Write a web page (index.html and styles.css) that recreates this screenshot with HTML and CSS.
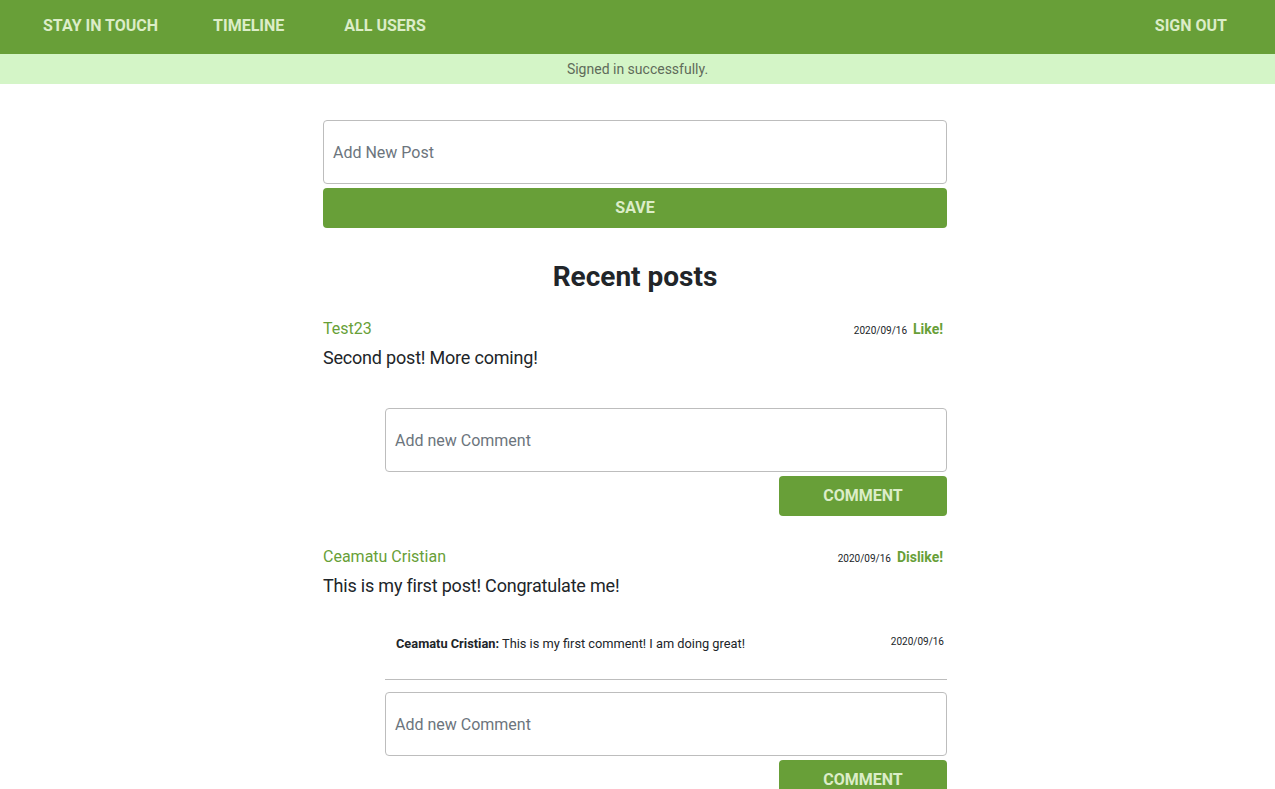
FILE: index.html
```html
<!DOCTYPE html>
<html>
<head>
<meta charset="utf-8">
<link rel="stylesheet" href="styles.css">
</head>
<body>
<nav class="nav">
  <div class="nav-left">
    <a class="nav-link brand">STAY IN TOUCH</a>
    <a class="nav-link l2">TIMELINE</a>
    <a class="nav-link l3">ALL USERS</a>
  </div>
  <a class="nav-link signout">SIGN OUT</a>
</nav>
<div class="flash">Signed in successfully.</div>
<main class="main">
  <form class="post-form">
    <div class="field">Add New Post</div>
    <div class="btn btn-full">SAVE</div>
  </form>
  <h2 class="title">Recent posts</h2>

  <section class="post">
    <div class="post-head">
      <span class="author">Test23</span>
      <span class="meta"><span class="date">2020/09/16</span><span class="like">Like!</span></span>
    </div>
    <p class="post-body">Second post! More coming!</p>
    <div class="comments">
      <div class="field">Add new Comment</div>
      <div class="btn-row"><div class="btn btn-comment">COMMENT</div></div>
    </div>
  </section>

  <section class="post">
    <div class="post-head">
      <span class="author">Ceamatu Cristian</span>
      <span class="meta"><span class="date">2020/09/16</span><span class="like">Dislike!</span></span>
    </div>
    <p class="post-body">This is my first post! Congratulate me!</p>
    <div class="comments">
      <div class="comment">
        <span class="comment-text"><b>Ceamatu Cristian:</b> This is my first comment! I am doing great!</span>
        <span class="date">2020/09/16</span>
      </div>
      <div class="field">Add new Comment</div>
      <div class="btn-row"><div class="btn btn-comment">COMMENT</div></div>
    </div>
  </section>
</main>
</body>
</html>
```
FILE: styles.css
```css
* { box-sizing: border-box; }
body {
  margin: 0;
  font-family: Roboto, "Liberation Sans", sans-serif;
  color: #212529;
  background: #fff;
}
.nav {
  height: 54px;
  background: #689f38;
  display: flex;
  align-items: center;
  justify-content: space-between;
  padding: 0 48px 0 43px;
}
.nav-left { display: flex; align-items: center; }
.nav-link {
  color: #dcedc8;
  font-weight: 700;
  font-size: 16px;
  text-decoration: none;
  line-height: 20px;
  padding-bottom: 2px;
}
.l2 { margin-left: 55px; }
.l3 { margin-left: 60px; }
.flash {
  height: 30px;
  background: #d4f5c7;
  color: #5f6b5a;
  font-size: 14px;
  text-align: center;
  line-height: 30px;
}
.main {
  width: 624px;
  margin: 36px 0 0 calc(50% - 314.5px);
}
.field {
  height: 64px;
  border: 1px solid #bdbdbd;
  border-radius: 4px;
  padding: 0 9px;
  display: flex;
  align-items: center;
  font-size: 16px;
  color: #6c757d;
}
.btn {
  height: 40px;
  background: #689f38;
  color: #dcedc8;
  font-weight: 700;
  font-size: 16px;
  border-radius: 4px;
  display: flex;
  align-items: center;
  justify-content: center;
  padding-bottom: 2px;
}
.btn-full { margin-top: 4px; }
.title {
  margin: 33px 0 0;
  text-align: center;
  font-size: 28px;
  font-weight: 700;
  line-height: 32px;
  color: #212529;
}
.post { margin-top: 26px; }
.post + .post { margin-top: 31px; }
.post-head {
  display: flex;
  justify-content: space-between;
  align-items: baseline;
  line-height: 20px;
}
.author { color: #689f38; font-size: 16px; }
.meta { padding-right: 4px; }
.date { font-size: 10px; color: #212529; }
.like { color: #689f38; font-weight: 700; font-size: 14px; margin-left: 6px; }
.post-body {
  margin: 6px 0 0;
  font-size: 18px;
  line-height: 22px;
  letter-spacing: -0.2px;
}
.comments {
  margin-left: 62px;
  margin-top: 39px;
}
.btn-row { display: flex; justify-content: flex-end; margin-top: 4px; }
.btn-comment { width: 168px; }
.comment {
  display: flex;
  justify-content: space-between;
  align-items: flex-start;
  padding: 12px 3px 0 11px;
  height: 58px;
  border-bottom: 1px solid #bdbdbd;
  margin-bottom: 12px;
  margin-top: -14px;
}
.comment-text { font-size: 12.8px; line-height: 14px; padding-top: 3px; }
.comment-text b { font-weight: 700; }
.comment .date { line-height: 12px; margin-top: 2px; }
```
